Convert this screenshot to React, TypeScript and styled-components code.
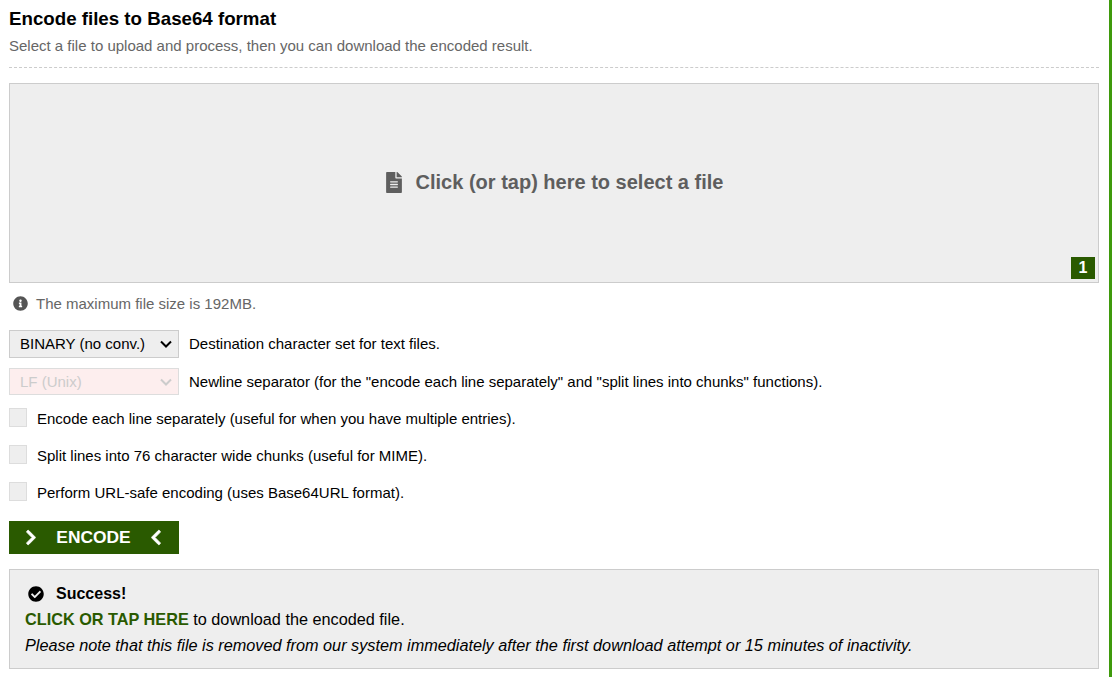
import { createGlobalStyle, styled } from 'styled-components'
import {
  FaCheckCircle,
  FaChevronLeft,
  FaChevronRight,
  FaFileAlt,
  FaInfoCircle
} from 'react-icons/fa'

const GlobalStyle = createGlobalStyle`
  html, body {
    margin: 0;
    padding: 0;
    background: #fff;
  }
  body {
    font-family: "Liberation Sans", Arial, sans-serif;
    font-size: 15px;
    color: #000;
  }
`

const chevron = (color: string) =>
  `url("data:image/svg+xml,%3Csvg xmlns='http://www.w3.org/2000/svg' width='12' height='8' viewBox='0 0 12 8'%3E%3Cpath d='M1 1.5l5 5 5-5' fill='none' stroke='${color}' stroke-width='2'/%3E%3C/svg%3E")`

const Page = styled.div`
  box-sizing: border-box;
  width: 1112px;
  height: 677px;
  overflow: hidden;
  padding: 9px 10px 0 9px;
  border-right: 3px solid #3f9a0c;
`

const Title = styled.h1`
  margin: 0;
  font-size: 18.72px;
  line-height: 20px;
  font-weight: 700;
`

const Subtitle = styled.p`
  margin: 8px 0 0;
  font-size: 15px;
  line-height: 18px;
  color: #666;
`

const Divider = styled.hr`
  margin: 12px 0 15px;
  border: 0;
  border-top: 1px dashed #ccc;
`

const DropZone = styled.div`
  position: relative;
  box-sizing: border-box;
  height: 200px;
  display: flex;
  align-items: center;
  justify-content: center;
  gap: 14px;
  background: #eee;
  border: 1px solid #ccc;
  color: #5e5e5e;
  font-size: 20px;
  font-weight: 700;
  padding: 0 0 2px 1px;
  svg {
    width: 16px;
    height: 21px;
  }
`

const Badge = styled.span`
  position: absolute;
  right: 3px;
  bottom: 3px;
  width: 24px;
  height: 22px;
  display: flex;
  align-items: center;
  justify-content: center;
  background: #2a5a00;
  color: #fff;
  font-size: 16px;
  font-weight: 700;
`

const Note = styled.div`
  display: flex;
  align-items: center;
  gap: 8px;
  margin: 11px 0 0 4px;
  height: 18px;
  color: #666;
  svg {
    width: 15px;
    height: 15px;
    color: #555;
  }
`

const OptionRow = styled.div<{ $top: number }>`
  display: flex;
  align-items: flex-start;
  gap: 10px;
  margin-top: ${p => p.$top}px;
  line-height: 27px;
`

const Select = styled.select<{ $height: number; $lift: number }>`
  appearance: none;
  box-sizing: border-box;
  width: 170px;
  height: ${p => p.$height}px;
  padding: 0 10px ${p => p.$lift}px;
  font-family: inherit;
  font-size: 15px;
  color: #000;
  background: #eee ${chevron('%23000')} no-repeat right 6px center;
  border: 1px solid #ccc;
  border-radius: 0;
  outline: none;
  &:disabled {
    color: #ccc;
    background: #fdeeee ${chevron('%23ccc')} no-repeat right 6px center;
    border-color: #ddd;
    opacity: 1;
  }
`

const CheckRow = styled.label<{ $top: number }>`
  display: flex;
  align-items: flex-start;
  gap: 10px;
  height: 19px;
  line-height: 21px;
  margin-top: ${p => p.$top}px;
`

const Checkbox = styled.input`
  appearance: none;
  box-sizing: border-box;
  width: 18px;
  height: 19px;
  margin: 0;
  background: #eee;
  border: 1px solid #ddd;
`

const EncodeButton = styled.button`
  box-sizing: border-box;
  display: flex;
  align-items: center;
  justify-content: space-between;
  width: 170px;
  height: 33px;
  margin-top: 20px;
  padding: 0 17px 0 16px;
  border: 0;
  background: #2a5a00;
  color: #fff;
  font-family: inherit;
  font-size: 17.4px;
  font-weight: 700;
  svg {
    width: 12px;
    height: 17px;
    stroke: currentColor;
    stroke-width: 24;
  }
`

const ResultPanel = styled.div`
  box-sizing: border-box;
  height: 100px;
  margin-top: 15px;
  padding: 14px 15px 0;
  background: #eee;
  border: 1px solid #ccc;
`

const ResultHeading = styled.div`
  display: flex;
  align-items: center;
  gap: 12px;
  height: 20px;
  padding-left: 3px;
  font-size: 16px;
  font-weight: 700;
  svg {
    width: 16px;
    height: 16px;
  }
`

const ResultLine = styled.div`
  margin-top: 5px;
  line-height: 20px;
  font-size: 16.25px;
`

const ResultNote = styled(ResultLine)`
  margin-top: 6px;
  font-style: italic;
`

const DownloadLink = styled.a`
  color: #2a5a00;
  font-weight: 700;
  text-decoration: none;
`

export default function App() {
  return (
    <Page>
      <GlobalStyle />
      <Title>Encode files to Base64 format</Title>
      <Subtitle>Select a file to upload and process, then you can download the encoded result.</Subtitle>
      <Divider />
      <DropZone>
        <FaFileAlt />
        Click (or tap) here to select a file
        <Badge>1</Badge>
      </DropZone>
      <Note>
        <FaInfoCircle />
        The maximum file size is 192MB.
      </Note>
      <OptionRow $top={18}>
        <Select $height={28} $lift={2} defaultValue="binary">
          <option value="binary">BINARY (no conv.)</option>
        </Select>
        <span>Destination character set for text files.</span>
      </OptionRow>
      <OptionRow $top={10}>
        <Select $height={27} $lift={0} disabled defaultValue="lf">
          <option value="lf">LF (Unix)</option>
        </Select>
        <span>Newline separator (for the "encode each line separately" and "split lines into chunks" functions).</span>
      </OptionRow>
      <CheckRow $top={13}>
        <Checkbox type="checkbox" />
        Encode each line separately (useful for when you have multiple entries).
      </CheckRow>
      <CheckRow $top={18}>
        <Checkbox type="checkbox" />
        Split lines into 76 character wide chunks (useful for MIME).
      </CheckRow>
      <CheckRow $top={18}>
        <Checkbox type="checkbox" />
        Perform URL-safe encoding (uses Base64URL format).
      </CheckRow>
      <EncodeButton>
        <FaChevronRight />
        ENCODE
        <FaChevronLeft />
      </EncodeButton>
      <ResultPanel>
        <ResultHeading>
          <FaCheckCircle />
          Success!
        </ResultHeading>
        <ResultLine>
          <DownloadLink href="#">CLICK OR TAP HERE</DownloadLink> to download the encoded file.
        </ResultLine>
        <ResultNote>
          Please note that this file is removed from our system immediately after the first download attempt or 15 minutes of inactivity.
        </ResultNote>
      </ResultPanel>
    </Page>
  )
}
